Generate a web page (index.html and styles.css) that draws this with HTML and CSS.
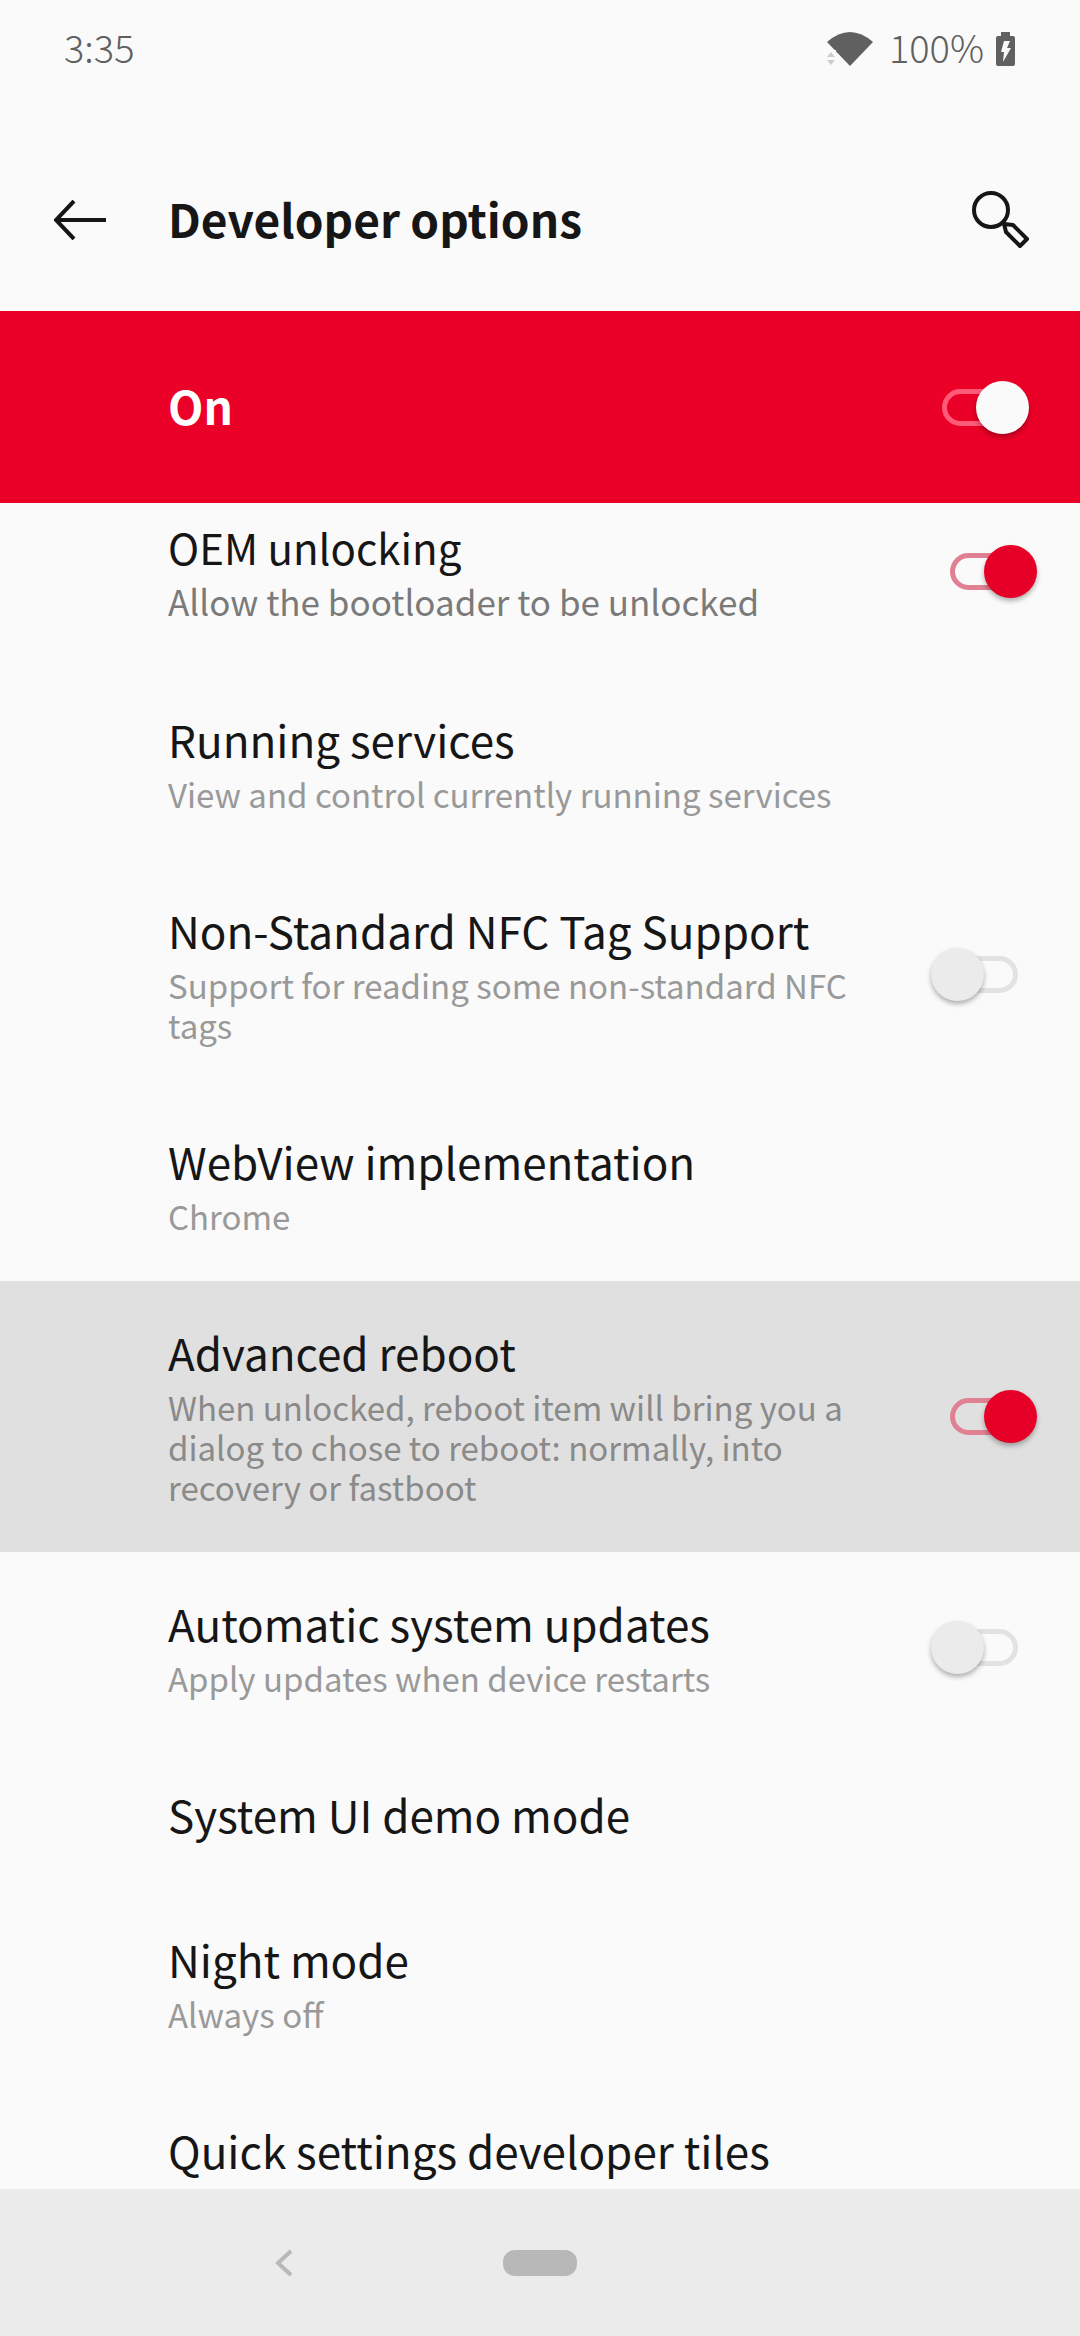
FILE: index.html
```
<!DOCTYPE html>
<html lang="en">
<head>
    <meta charset="UTF-8">
    <meta name="viewport" content="width=device-width, initial-scale=1.0">
    <title>Developer options</title>
    <link rel="stylesheet" href="styles.css">
</head>
<body>
    <div class="status-bar">
        <span class="time">3:35</span>
        <svg class="wifi" width="46" height="36" viewBox="0 0 46 36">
            <path d="M0 11 Q23 -9 46 11 L23 35 Z" fill="#606060"/>
            <path d="M-1 19 H9 V35 H-1 Z" fill="#fafafa"/>
            <path d="M0 26 L4 21 L8 26 Z M0 29 H8 L4 34 Z" fill="#cccccc"/>
        </svg>
        <span class="battery-level">100%</span>
        <svg class="battery" width="19" height="34" viewBox="0 0 19 34">
            <path d="M5 0 H14 V4 H17 Q19 4 19 6 V32 Q19 34 17 34 H2 Q0 34 0 32 V6 Q0 4 2 4 H5 Z" fill="#606060"/>
            <path d="M8 9 H14 L11 16 H15 L7 30 L8 20 H5 Z" fill="#fafafa"/>
        </svg>
    </div>

    <header class="app-bar">
        <button class="icon-button" aria-label="Back">
            <svg width="52" height="40" viewBox="0 0 52 40" fill="none" stroke="#161616" stroke-width="4">
                <path d="M20 1 L2 20 L20 39 M2 20 H52"/>
            </svg>
        </button>
        <h1>Developer options</h1>
        <button class="icon-button" aria-label="Search">
            <svg width="58" height="58" viewBox="0 0 58 58" fill="none" stroke="#161616" stroke-width="4">
                <circle cx="19" cy="19" r="17"/>
                <path d="M32 33 L41 34 L55 48 L48 55 L34 41 Z" stroke-linejoin="round"/>
            </svg>
        </button>
    </header>

    <label class="master">
        <span class="master-text">On</span>
        <input type="checkbox" class="switch" checked>
    </label>

    <main class="list">
        <label class="row large">
            <span class="text">
                <span class="title">OEM unlocking</span>
                <span class="summary">Allow the bootloader to be unlocked</span>
            </span>
            <input type="checkbox" class="switch" checked>
        </label>
        <a class="row" href="#">
            <span class="text">
                <span class="title">Running services</span>
                <span class="summary">View and control currently running services</span>
            </span>
        </a>
        <label class="row">
            <span class="text">
                <span class="title">Non-Standard NFC Tag Support</span>
                <span class="summary">Support for reading some non-standard NFC tags</span>
            </span>
            <input type="checkbox" class="switch">
        </label>
        <a class="row" href="#">
            <span class="text">
                <span class="title">WebView implementation</span>
                <span class="summary">Chrome</span>
            </span>
        </a>
        <label class="row pressed">
            <span class="text">
                <span class="title">Advanced reboot</span>
                <span class="summary">When unlocked, reboot item will bring you a dialog to chose to reboot: normally, into recovery or fastboot</span>
            </span>
            <input type="checkbox" class="switch" checked>
        </label>
        <label class="row">
            <span class="text">
                <span class="title">Automatic system updates</span>
                <span class="summary">Apply updates when device restarts</span>
            </span>
            <input type="checkbox" class="switch">
        </label>
        <a class="row" href="#">
            <span class="text">
                <span class="title">System UI demo mode</span>
            </span>
        </a>
        <a class="row" href="#">
            <span class="text">
                <span class="title">Night mode</span>
                <span class="summary">Always off</span>
            </span>
        </a>
        <a class="row" href="#">
            <span class="text">
                <span class="title">Quick settings developer tiles</span>
            </span>
        </a>
    </main>

    <nav class="nav-bar">
        <button class="icon-button" aria-label="Back">
            <svg width="18" height="28" viewBox="0 0 18 28" fill="none" stroke="#b8b8b8" stroke-width="4">
                <path d="M16 2 L3 14 L16 26"/>
            </svg>
        </button>
        <button class="home" aria-label="Home"></button>
    </nav>
</body>
</html>
```
FILE: styles.css
```
:root {
    --background: #fafafa;
    --text: #161616;
    --summary: #999999;
    --red: #eb0028;
    --inset: 168px;
}
* {
    box-sizing: border-box;
}
body {
    margin: 0;
    height: 100vh;
    display: flex;
    flex-direction: column;
    overflow: hidden;
    background: var(--background);
    color: var(--text);
    font-family: "Noto Sans CJK SC", "Noto Sans", sans-serif;
}
button {
    border: none;
    padding: 0;
    background: none;
    cursor: pointer;
}
svg {
    display: block;
}
.status-bar {
    display: flex;
    align-items: center;
    flex-shrink: 0;
    height: 98px;
    padding: 0 65px 0 64px;
    color: #606060;
    font-size: 38px;
    font-weight: 300;
}
.time,
.battery-level {
    padding-bottom: 6px;
}
.time {
    flex: 1;
}
.wifi {
    margin-right: 16px;
}
.battery {
    margin-left: 12px;
}
.app-bar {
    display: grid;
    grid-template-columns: 114px 1fr auto;
    align-items: center;
    flex-shrink: 0;
    padding: 91px 50px 60px 54px;
}
h1 {
    margin: 0;
    padding-bottom: 4px;
    font-size: 46px;
    line-height: 58px;
    font-weight: 700;
}
.master {
    display: flex;
    align-items: center;
    justify-content: space-between;
    flex-shrink: 0;
    height: 192px;
    padding: 0 70px 0 var(--inset);
    background: var(--red);
    color: white;
    font-size: 46px;
    font-weight: 700;
}
.master-text {
    padding-bottom: 4px;
}
.list {
    flex: 1;
    min-height: 0;
    overflow: hidden;
}
.row {
    display: flex;
    align-items: center;
    justify-content: space-between;
    padding: 43px 62px 43px var(--inset);
    color: inherit;
    text-decoration: none;
}
/* the list is scrolled a little under the red bar */
.row:first-child {
    margin-top: -28px;
}
.pressed {
    background: #e0e0e0;
}
.pressed .summary {
    color: #8a8a8a;
}
.text {
    max-width: 700px;
    padding-bottom: 2px;
}
.title,
.summary {
    display: block;
}
.title {
    font-size: 44px;
    line-height: 57px;
}
.summary {
    margin-top: 6px;
    color: var(--summary);
    font-size: 33px;
    line-height: 40px;
}
.large .title {
    font-size: 42px;
}
.large .summary {
    margin-top: 4px;
    color: #7a7a7a;
    font-size: 35px;
    line-height: 44px;
}
.switch {
    appearance: none;
    position: relative;
    flex-shrink: 0;
    width: 68px;
    height: 37px;
    margin: 0;
    border: 5px solid #e2e2e2;
    border-radius: 19px;
}
.switch::before {
    content: "";
    position: absolute;
    top: -13px;
    left: -24px;
    width: 53px;
    height: 53px;
    border-radius: 50%;
    background: #ebebeb;
    box-shadow: 0 3px 5px rgba(0, 0, 0, 0.3);
}
.switch:checked {
    border-color: #e08093;
}
.switch:checked::before {
    left: 29px;
    background: #e60028;
}
.master .switch {
    border-color: #ff5a78;
}
.master .switch::before {
    background: var(--background);
}
.nav-bar {
    display: grid;
    grid-template-columns: 1fr 74px 1fr;
    align-items: center;
    flex-shrink: 0;
    height: 147px;
    background: #ebebeb;
}
.nav-bar .icon-button {
    justify-self: center;
    margin-left: 64px;
}
.home {
    height: 26px;
    border-radius: 12px;
    background: #b8b8b8;
}
```
